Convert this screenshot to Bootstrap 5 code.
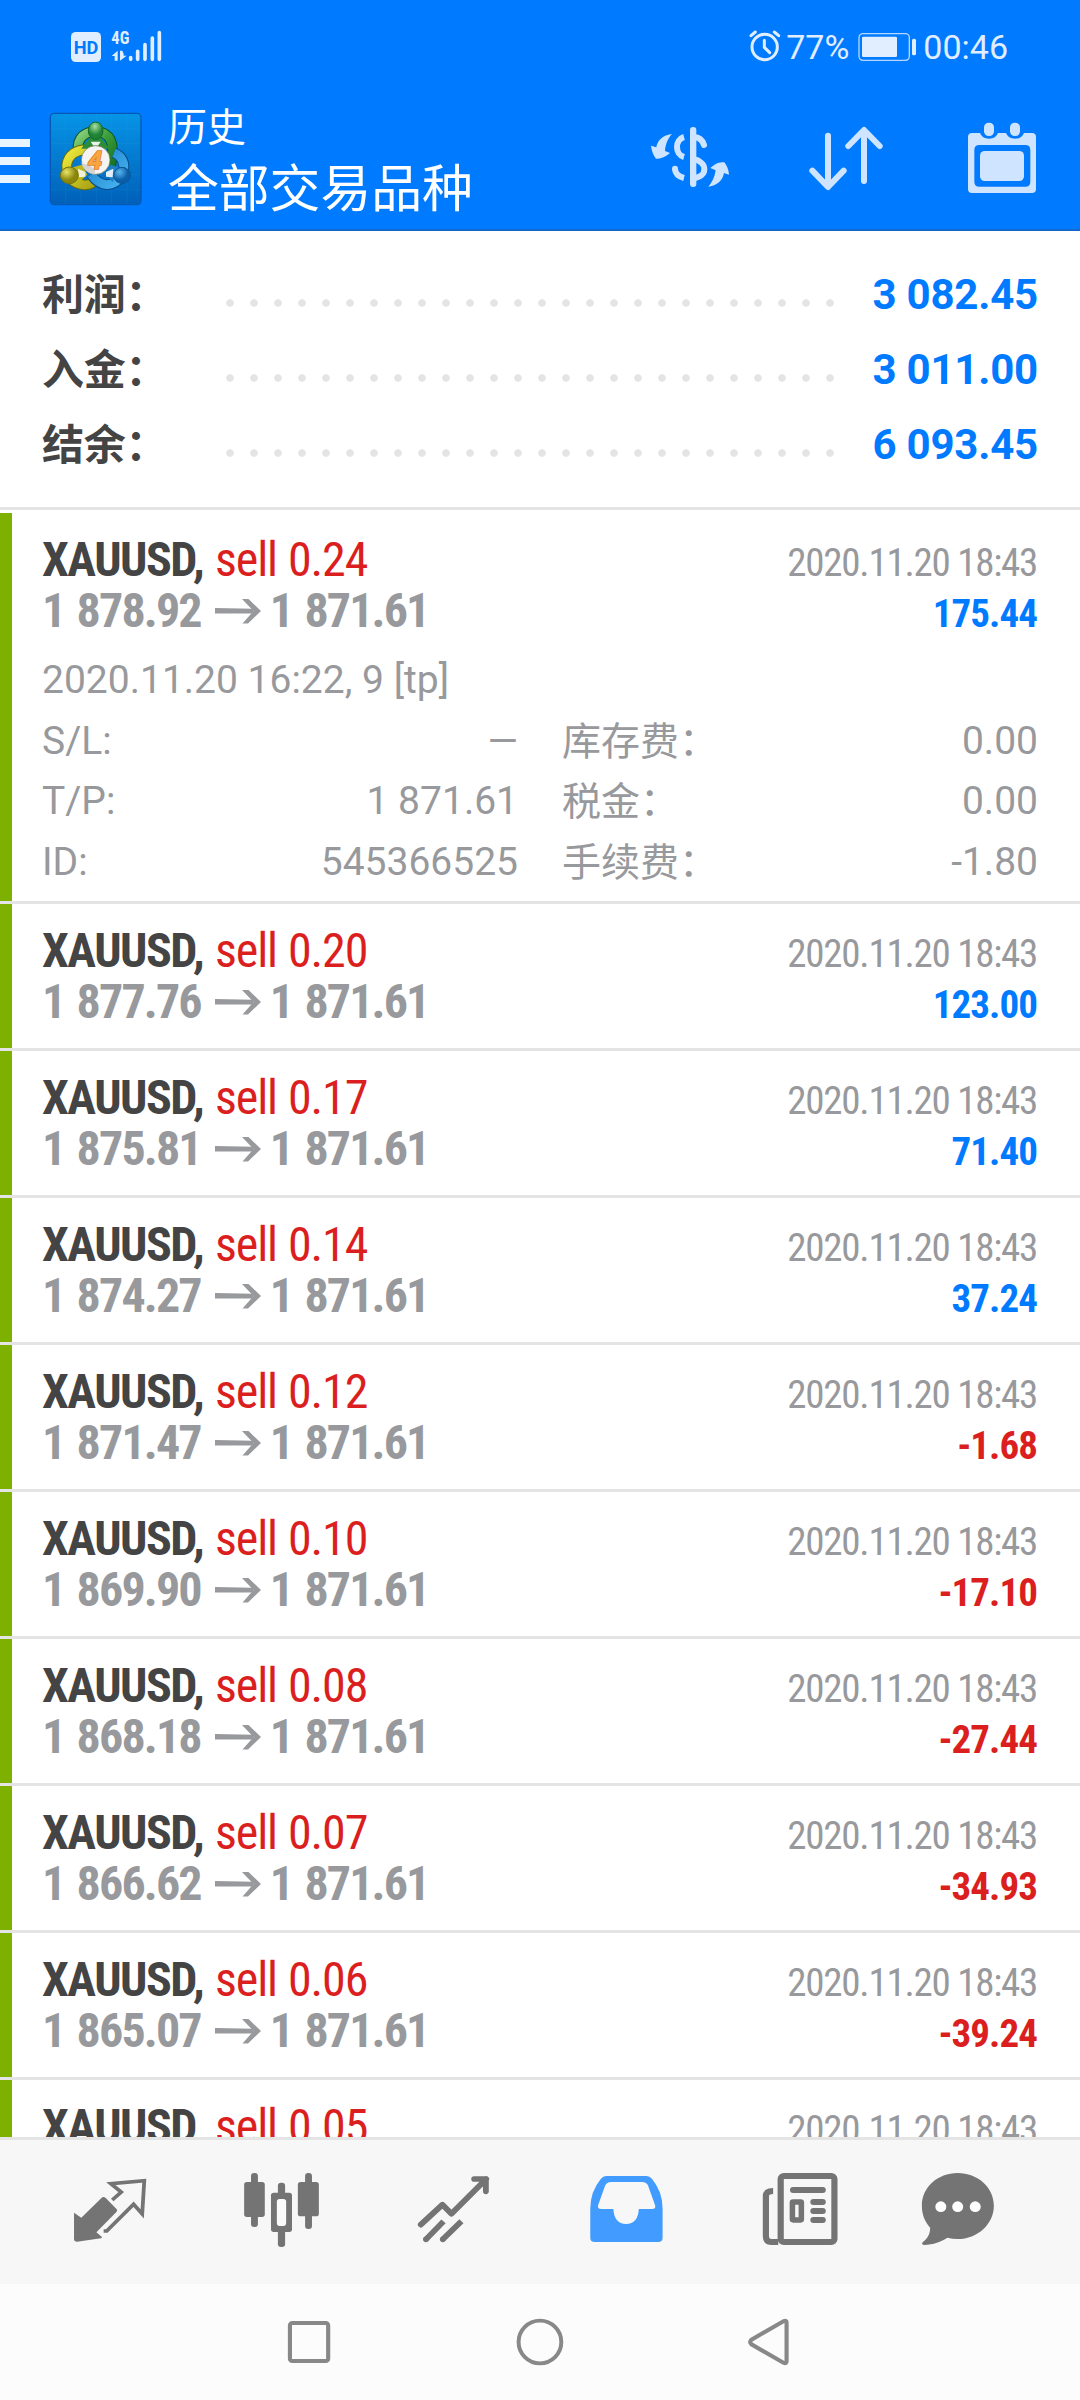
<!DOCTYPE html>
<html lang="zh-CN">
<head>
<meta charset="utf-8">
<meta name="viewport" content="width=device-width, initial-scale=1">
<title>历史</title>
<link href="https://cdn.jsdelivr.net/npm/bootstrap@5.3.0/dist/css/bootstrap.min.css" rel="stylesheet">
<style>
  body { font-family: Roboto, "Noto Sans CJK SC", sans-serif; width: 1080px; height: 2400px; color: #444; }
  svg { display: block; flex: none; }
  .app-head { background: #007aff; height: 231px; border-bottom: 2px solid #1268cc; }
  .status-bar { height: 92px; color: #e0eeff; font-size: 34px; line-height: 40px; padding: 27px 72px 0 64px; }
  .title-bar { height: 137px; }
  .head-sub { font-size: 39px; line-height: 44px; margin-bottom: 7px; }
  .head-main { font-size: 50.8px; line-height: 66px; }
  .summary { padding: 26px 42px 25px; border-bottom: 3px solid #e4e4e4; }
  .sum-line { height: 75px; line-height: 75px; font-size: 42px; font-weight: 700; }
  .sum-line .name { width: 184px; padding-top: 2px; letter-spacing: -.2px; }
  .sum-line .dots { width: 624px; height: 8px; margin-top: 16px; background: radial-gradient(circle at 4px 4px, #e4e4e4 3.4px, transparent 4.1px) 0 0 / 24px 8px repeat-x; }
  .sum-line .total { color: #007aff; letter-spacing: -.2px; }
  .deals { padding-top: 3px; min-height: 0; }
  .deal { border-bottom: 3px solid #e4e4e4; padding: 21px 42px; line-height: 51px; font-size: 39px; background: linear-gradient(#7eb000, #7eb000) 0 0 / 12px 100% no-repeat; color: #98999c; }
  .deal .head-line, .deal .price-line { height: 51px; padding-right: 1px; font-family: "Roboto Condensed", Roboto, sans-serif; letter-spacing: -1.25px; }
  .deal .sym { font-size: 48px; font-weight: 700; color: #444; letter-spacing: -1.5px; width: 173px; white-space: nowrap; }
  .deal .side { font-size: 48px; color: #db1f1f; letter-spacing: -1.1px; word-spacing: 1px; }
  .deal .px { font-size: 48px; font-weight: 700; letter-spacing: -1.85px; word-spacing: 3px; white-space: nowrap; }
  .arrow { width: 46px; height: 26px; margin: 1px 9px 0 14px; align-self: center; }
  .gain, .loss { font-weight: 700; letter-spacing: -.95px; }
  .gain { color: #007aff; }
  .loss { color: #db1f1f; }
  .more { line-height: 60.7px; padding-top: 14px; margin-bottom: -13px; }
  .more .half { width: 476px; }
  .more .cjk { padding-top: 1px; margin-bottom: -1px; }
  .tabs { height: 147px; background: #f7f7f7; border-top: 3px solid #e4e4e4; padding-left: 24px; color: #747474; }
  .sysnav { height: 116px; background: #fcfcfc; padding-left: 195px; color: #888; }
</style>
</head>
<body class="d-flex flex-column overflow-hidden bg-white m-0">

<svg width="0" height="0" class="position-absolute">
  <defs>
    <symbol id="arr" viewBox="0 0 46 26"><path d="M0 10 38 10.8V15.5L0 15.5Z" fill="#98999c"/><path d="M27 1h6.5L46 13 33 25.5H27.5L38.5 13Z" fill="#98999c"/></symbol>
  </defs>
</svg>

<header class="app-head flex-shrink-0">
  <div class="status-bar d-flex justify-content-between">
    <svg width="110" height="50" viewBox="0 0 330 150" style="margin-top:-3px" fill="#e0eeff">
      <rect x="21" y="24" width="90" height="90" rx="14"/>
      <text x="66" y="89" font-size="56" font-weight="700" text-anchor="middle" fill="#007aff" textLength="74" lengthAdjust="spacingAndGlyphs">HD</text>
      <text x="142" y="60" font-size="55" font-weight="700" font-family="Roboto Condensed" textLength="54" lengthAdjust="spacingAndGlyphs">4G</text>
      <path d="M161 80v30h-9V96h-9zM168 80v30l20-15h-9V90l-4-10z"/>
      <g stroke="#e0eeff" stroke-width="11" stroke-linecap="round"><path d="M200 101v5M221 82v24M243 62v44M265 42v64M286 26v80"/></g>
    </svg>
    <div class="d-flex align-items-center" style="height:40px">
      <svg width="34" height="36" viewBox="445 88 102 108" fill="none" stroke="#e0eeff" stroke-width="9" stroke-linecap="round"><circle cx="495" cy="142" r="38"/><path d="M494 122v21l16 16M454 108l13-11M537 108l-13-11"/></svg>
      <span class="ms-1">77%</span>
      <svg class="ms-2" width="62" height="32" viewBox="770 92 186 96"><rect x="776" y="100" width="151" height="80" rx="12" fill="none" stroke="#b4d7ff" stroke-width="4"/><rect x="785" y="109" width="105" height="61" rx="4" fill="#e0eeff"/><rect x="935" y="115" width="12" height="50" rx="5" fill="#e0eeff"/></svg>
      <span class="ms-1">00:46</span>
    </div>
  </div>
  <div class="title-bar d-flex">
    <svg width="30" height="110" viewBox="0 0 30 110" style="margin-top:12px" fill="#e8f5ff"><path d="M0 35h30v8H0zM0 53h30v8H0zM0 71h30v8H0z"/></svg>
    <svg width="110" height="110" viewBox="0 0 330 330" style="margin:12px 0 0 10px">
      <defs>
        <linearGradient id="lb" x1="0" y1="0" x2="0" y2="1"><stop offset="0" stop-color="#0794e6"/><stop offset="1" stop-color="#0060b8"/></linearGradient>
        <linearGradient id="gg" x1="0" y1="0" x2="1" y2="1"><stop offset="0" stop-color="#8fd47f"/><stop offset=".5" stop-color="#3a9c3a"/><stop offset="1" stop-color="#187424"/></linearGradient>
        <linearGradient id="gy" x1="0" y1="0" x2="1" y2="1"><stop offset="0" stop-color="#eee83c"/><stop offset="1" stop-color="#a5a010"/></linearGradient>
        <linearGradient id="gb" x1="0" y1="0" x2="1" y2="1"><stop offset="0" stop-color="#1a83cb"/><stop offset="1" stop-color="#48b3f0"/></linearGradient>
        <radialGradient id="bg1" cx=".45" cy=".25"><stop offset="0" stop-color="#a7dfa0"/><stop offset="1" stop-color="#1f8335"/></radialGradient>
        <radialGradient id="by1" cx=".35" cy=".3"><stop offset="0" stop-color="#e8e568"/><stop offset="1" stop-color="#8b860c"/></radialGradient>
        <radialGradient id="bb1" cx=".35" cy=".3"><stop offset="0" stop-color="#58b4ee"/><stop offset="1" stop-color="#0b5ea8"/></radialGradient>
      </defs>
      <rect x="31" y="28" width="272" height="274" rx="12" fill="url(#lb)" stroke="#0758b4" stroke-width="4"/>
      <path d="M77 29v271M123 29v271M169 29v271M215 29v271M261 29v271M32 73h269M32 119h269M32 165h269M32 211h269M32 257h269" stroke="#35b1f2" stroke-opacity=".18" stroke-width="2"/>
      <path d="M120 152C104 116 124 84 166 82C210 84 228 116 212 184" fill="none" stroke="#0b5522" stroke-width="32"/>
      <path d="M120 152C104 116 124 84 166 82C210 84 228 116 212 184" fill="none" stroke="url(#gg)" stroke-width="26"/>
      <path d="M142 138C110 136 84 152 80 184C80 220 100 240 134 243C148 243 160 238 170 222" fill="none" stroke="#6c6c0a" stroke-width="32"/>
      <path d="M142 138C110 136 84 152 80 184C80 220 100 240 134 243C148 243 160 238 170 222" fill="none" stroke="url(#gy)" stroke-width="26"/>
      <path d="M222 146C246 156 256 176 250 206C238 230 220 242 200 242C178 240 166 230 154 212" fill="none" stroke="#074b8c" stroke-width="32"/>
      <path d="M222 146C246 156 256 176 250 206C238 230 220 242 200 242C178 240 166 230 154 212" fill="none" stroke="url(#gb)" stroke-width="26"/>
      <path d="M124 134c8-14 20-22 28-34h30c6 12 18 20 26 34z" fill="#2b8d35"/><path d="M152 113h30l-8 12h-14z" fill="#e9f3e9"/>
      <path d="M98 190l28-8 16 30-24 22z" fill="#bdb81b"/><path d="M114 194l22 10v14l-20 2z" fill="#f1f1dc"/>
      <path d="M236 190l-24-8-16 30 22 22z" fill="#1f7fc4"/><path d="M220 194l-22 10v14l20 2z" fill="#e3eff8"/>
      <ellipse cx="167" cy="80" rx="22" ry="26" fill="url(#bg1)" stroke="#14662a" stroke-width="3"/>
      <ellipse cx="88" cy="214" rx="27" ry="25" fill="url(#by1)" stroke="#77740a" stroke-width="3"/>
      <ellipse cx="246" cy="214" rx="25" ry="24" fill="url(#bb1)" stroke="#0a5292" stroke-width="3"/>
      <circle cx="167" cy="168" r="43" fill="#f6f4f3" stroke="#5c6440" stroke-opacity=".6" stroke-width="3"/>
      <path d="M124 176a43 43 0 0 0 40 35q10-22-40-35z" fill="#d6d3d3"/>
      <text x="165" y="194" text-anchor="middle" font-size="76" font-weight="700" font-style="italic" fill="#f9a640" stroke="#dd8034" stroke-width="5" paint-order="stroke">4</text>
    </svg>
    <div class="text-white" style="margin:14px 0 0 18px">
      <div class="head-sub">历史</div>
      <div class="head-main">全部交易品种</div>
    </div>
    <div class="d-flex ms-auto">
      <svg width="160" height="137" viewBox="0 276 480 411" fill="#cfe5ff">
        <rect x="270" y="381" width="19" height="180" rx="9"/>
        <g fill="none" stroke="#cfe5ff" stroke-width="18"><path d="M252 411C224 419 224 463 252 471M252 534C236 530 226 520 225 508"/><path d="M280 412C298 411 307 419 312 435" stroke-linecap="round"/><path d="M280 477C324 486 324 530 280 534"/></g>
        <circle cx="225" cy="506" r="9"/>
        <path d="M216 402C184 406 172 424 169 442L153 437C155 452 160 466 168 476C182 478 198 470 210 459L195 453C196 434 204 414 216 402ZM325 560C354 556 368 540 372 519L387 524C386 508 380 496 373 487C356 484 342 494 331 504L347 511C344 532 336 548 325 560Z"/>
      </svg>
      <svg width="160" height="137" viewBox="480 276 480 411" fill="none" stroke="#cfe5ff" stroke-width="18" stroke-linecap="round" stroke-linejoin="round"><path d="M684 407V560M637 512l47 49 47-49M792 543V391M745 438l47-48 47 48"/></svg>
      <svg width="160" height="137" viewBox="960 276 480 411" fill="#cfe5ff">
        <path fill-rule="evenodd" d="M1116 399h24q6 17 27 17t27-17h24q6 17 27 17t27-17h24q12 0 12 12v156q0 12-12 12h-180q-12 0-12-12V411q0-12 12-12ZM1138 435q-15 0-15 15v95q0 15 15 15h138q15 0 15-15v-95q0-15-15-15Z"/>
        <rect x="1140" y="453" width="132" height="90" rx="14"/><rect x="1152" y="368" width="30" height="40" rx="14"/><rect x="1230" y="368" width="30" height="40" rx="14"/>
      </svg>
    </div>
  </div>
</header>

<section class="summary flex-shrink-0">
  <div class="sum-line d-flex align-items-center"><span class="name">利润：</span><span class="dots"></span><span class="total ms-auto">3 082.45</span></div>
  <div class="sum-line d-flex align-items-center"><span class="name">入金：</span><span class="dots"></span><span class="total ms-auto">3 011.00</span></div>
  <div class="sum-line d-flex align-items-center"><span class="name">结余：</span><span class="dots"></span><span class="total ms-auto">6 093.45</span></div>
</section>

<main class="deals flex-grow-1 overflow-hidden">
  <article class="deal">
    <div class="head-line d-flex align-items-baseline"><span class="sym">XAUUSD,</span><span class="side">sell 0.24</span><span class="ms-auto">2020.11.20 18:43</span></div>
    <div class="price-line d-flex align-items-baseline"><span class="px">1 878.92</span><svg class="arrow"><use href="#arr"/></svg><span class="px">1 871.61</span><span class="gain ms-auto">175.44</span></div>
    <div class="more">
      <div>2020.11.20 16:22, 9 [tp]</div>
      <div class="d-flex justify-content-between"><div class="half d-flex justify-content-between"><span>S/L:</span><span>—</span></div><div class="half d-flex justify-content-between"><span class="cjk">库存费：</span><span>0.00</span></div></div>
      <div class="d-flex justify-content-between"><div class="half d-flex justify-content-between"><span>T/P:</span><span>1 871.61</span></div><div class="half d-flex justify-content-between"><span class="cjk">税金：</span><span>0.00</span></div></div>
      <div class="d-flex justify-content-between"><div class="half d-flex justify-content-between"><span>ID:</span><span>545366525</span></div><div class="half d-flex justify-content-between"><span class="cjk">手续费：</span><span>-1.80</span></div></div>
    </div>
  </article>
  <article class="deal">
    <div class="head-line d-flex align-items-baseline"><span class="sym">XAUUSD,</span><span class="side">sell 0.20</span><span class="ms-auto">2020.11.20 18:43</span></div>
    <div class="price-line d-flex align-items-baseline"><span class="px">1 877.76</span><svg class="arrow"><use href="#arr"/></svg><span class="px">1 871.61</span><span class="gain ms-auto">123.00</span></div>
  </article>
  <article class="deal">
    <div class="head-line d-flex align-items-baseline"><span class="sym">XAUUSD,</span><span class="side">sell 0.17</span><span class="ms-auto">2020.11.20 18:43</span></div>
    <div class="price-line d-flex align-items-baseline"><span class="px">1 875.81</span><svg class="arrow"><use href="#arr"/></svg><span class="px">1 871.61</span><span class="gain ms-auto">71.40</span></div>
  </article>
  <article class="deal">
    <div class="head-line d-flex align-items-baseline"><span class="sym">XAUUSD,</span><span class="side">sell 0.14</span><span class="ms-auto">2020.11.20 18:43</span></div>
    <div class="price-line d-flex align-items-baseline"><span class="px">1 874.27</span><svg class="arrow"><use href="#arr"/></svg><span class="px">1 871.61</span><span class="gain ms-auto">37.24</span></div>
  </article>
  <article class="deal">
    <div class="head-line d-flex align-items-baseline"><span class="sym">XAUUSD,</span><span class="side">sell 0.12</span><span class="ms-auto">2020.11.20 18:43</span></div>
    <div class="price-line d-flex align-items-baseline"><span class="px">1 871.47</span><svg class="arrow"><use href="#arr"/></svg><span class="px">1 871.61</span><span class="loss ms-auto">-1.68</span></div>
  </article>
  <article class="deal">
    <div class="head-line d-flex align-items-baseline"><span class="sym">XAUUSD,</span><span class="side">sell 0.10</span><span class="ms-auto">2020.11.20 18:43</span></div>
    <div class="price-line d-flex align-items-baseline"><span class="px">1 869.90</span><svg class="arrow"><use href="#arr"/></svg><span class="px">1 871.61</span><span class="loss ms-auto">-17.10</span></div>
  </article>
  <article class="deal">
    <div class="head-line d-flex align-items-baseline"><span class="sym">XAUUSD,</span><span class="side">sell 0.08</span><span class="ms-auto">2020.11.20 18:43</span></div>
    <div class="price-line d-flex align-items-baseline"><span class="px">1 868.18</span><svg class="arrow"><use href="#arr"/></svg><span class="px">1 871.61</span><span class="loss ms-auto">-27.44</span></div>
  </article>
  <article class="deal">
    <div class="head-line d-flex align-items-baseline"><span class="sym">XAUUSD,</span><span class="side">sell 0.07</span><span class="ms-auto">2020.11.20 18:43</span></div>
    <div class="price-line d-flex align-items-baseline"><span class="px">1 866.62</span><svg class="arrow"><use href="#arr"/></svg><span class="px">1 871.61</span><span class="loss ms-auto">-34.93</span></div>
  </article>
  <article class="deal">
    <div class="head-line d-flex align-items-baseline"><span class="sym">XAUUSD,</span><span class="side">sell 0.06</span><span class="ms-auto">2020.11.20 18:43</span></div>
    <div class="price-line d-flex align-items-baseline"><span class="px">1 865.07</span><svg class="arrow"><use href="#arr"/></svg><span class="px">1 871.61</span><span class="loss ms-auto">-39.24</span></div>
  </article>
  <article class="deal">
    <div class="head-line d-flex align-items-baseline"><span class="sym">XAUUSD,</span><span class="side">sell 0.05</span><span class="ms-auto">2020.11.20 18:43</span></div>
  </article>
</main>

<nav class="tabs d-flex flex-shrink-0">
  <svg width="172" height="144" viewBox="69.7 240 499.5 432" preserveAspectRatio="none" fill="currentColor">
    <path d="M215 458l21 15 58-58q6-7 13-1l32 34q3 4-1 8l-58 61 16 14q1 3-3 4l-69 10q-9 0-9-8z"/>
    <path d="M326 420l26-24-30-25 97-9-6 100-25-29-78 80h-9" fill="none" stroke="currentColor" stroke-width="11"/>
  </svg>
  <svg width="172" height="144" viewBox="569.2 240 499.5 432" preserveAspectRatio="none" fill="currentColor">
    <rect x="709" y="366" width="60" height="105" rx="8"/><rect x="729" y="339" width="20" height="162" rx="9"/>
    <rect x="865" y="366" width="61" height="103" rx="8"/><rect x="886" y="339" width="20" height="168" rx="9"/>
    <rect x="807" y="368" width="21" height="46" rx="9"/><rect x="807" y="505" width="21" height="56" rx="9"/>
    <path d="M795 398h45q8 0 8 8v102q0 8-8 8h-45q-8 0-8-8V406q0-8 8-8z"/>
    <path fill="#fafafa" d="M812 417h11q8 0 8 8v64q0 9-8 9h-11q-8 0-8-9v-64q0-8 8-8z"/>
  </svg>
  <svg width="172" height="144" viewBox="1068.7 240 499.5 432" preserveAspectRatio="none" fill="none" stroke="currentColor" stroke-width="17" stroke-linejoin="round">
    <path d="M1222 494l63-60 26 27 101-104M1377 357h34v37" stroke-linecap="round"/><path d="M1237 538l51-54M1286 538l54-54"/><g fill="currentColor" stroke="none"><circle cx="1237" cy="538" r="8.5"/><circle cx="1286" cy="538" r="8.5"/></g>
  </svg>
  <svg width="172" height="144" viewBox="0 240 499.5 432" preserveAspectRatio="none">
    <path fill="#429bff" fill-rule="evenodd" d="M192 348h117q10 0 16 8Q356 395 356 445v88q0 13-13 13H159q-13 0-13-13v-88Q146 395 177 356q6-8 15-8zM206 366q-12 0-17 11l-20 58q-3 12 9 12h35q2 44 37 45q35-1 37-45h38q13 0 9-12l-20-58q-5-11-17-11z"/>
  </svg>
  <svg width="172" height="144" viewBox="499.5 240 499.5 432" preserveAspectRatio="none" fill="none" stroke="currentColor" stroke-width="18">
    <rect x="699" y="348" width="156" height="198" rx="9"/><path d="M677 393q-21 0-21 16v119q0 18 16 18h20"/>
    <path stroke-linecap="round" d="M735 390h86M794 426h27M794 453h27M794 480h27"/><rect x="733" y="426" width="26" height="54" rx="2" stroke-width="16"/>
  </svg>
  <svg width="172" height="144" viewBox="999 240 499.5 432" preserveAspectRatio="none" fill="currentColor">
    <path d="M1213 339c58 0 105 43 105 98s-47 100-105 100q-16 0-30-4c-18 12-40 21-68 22q-9-2-3-9c16-13 21-27 21-43c-16-19-24-40-24-66c0-55 46-98 104-98z"/><g fill="#fff"><circle cx="1164" cy="440" r="16"/><circle cx="1213" cy="440" r="16"/><circle cx="1264" cy="440" r="16"/></g>
  </svg>
</nav>

<footer class="sysnav d-flex flex-shrink-0">
  <svg width="230" height="116" viewBox="566.3 672 667.9 348" preserveAspectRatio="none"><rect x="842" y="789" width="111" height="114" rx="7" fill="none" stroke="currentColor" stroke-width="12"/></svg>
  <svg width="230" height="116" viewBox="1234.2 672 667.9 348" preserveAspectRatio="none"><ellipse cx="1568" cy="846" rx="62" ry="64" fill="none" stroke="currentColor" stroke-width="11.5"/></svg>
  <svg width="230" height="116" viewBox="333.9 672 667.9 348" preserveAspectRatio="none"><path d="M614 839l94-56q8-3 8 5v116q0 8-8 5l-94-56q-7-7 0-14z" fill="none" stroke="currentColor" stroke-width="12"/></svg>
</footer>

<script src="https://cdn.jsdelivr.net/npm/bootstrap@5.3.0/dist/js/bootstrap.bundle.min.js"></script>
</body>
</html>
